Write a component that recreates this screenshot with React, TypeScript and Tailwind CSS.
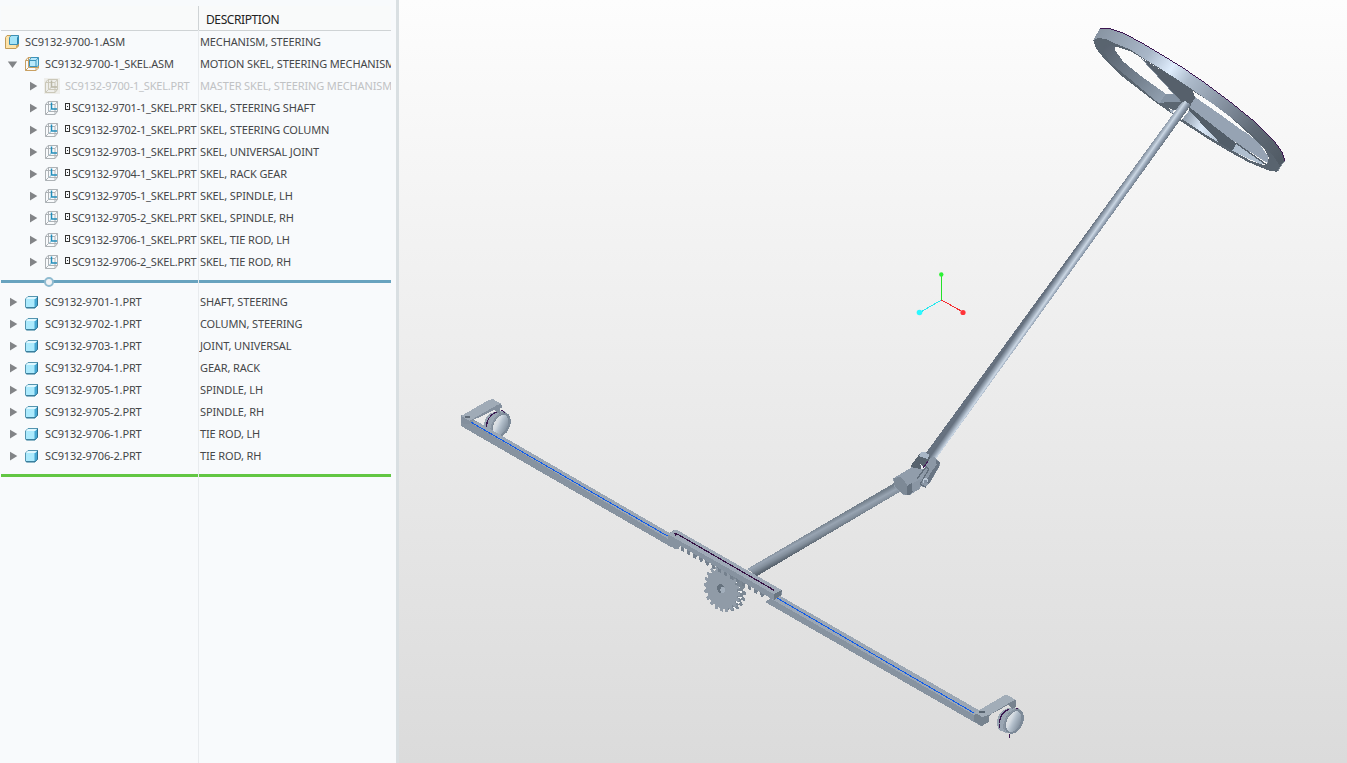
import React from "react";

type Kind = "asm" | "skelAsm" | "skel" | "ghost" | "part";
type Row = { name: string; desc: string; kind: Kind; level: number; open?: boolean; flag?: boolean };

const skeletons: Row[] = [
  { name: "SC9132-9700-1.ASM", desc: "MECHANISM, STEERING", kind: "asm", level: -1 },
  { name: "SC9132-9700-1_SKEL.ASM", desc: "MOTION SKEL, STEERING MECHANISM", kind: "skelAsm", level: 0, open: true },
  { name: "SC9132-9700-1_SKEL.PRT", desc: "MASTER SKEL, STEERING MECHANISM", kind: "ghost", level: 1 },
  { name: "SC9132-9701-1_SKEL.PRT", desc: "SKEL, STEERING SHAFT", kind: "skel", level: 1, flag: true },
  { name: "SC9132-9702-1_SKEL.PRT", desc: "SKEL, STEERING COLUMN", kind: "skel", level: 1, flag: true },
  { name: "SC9132-9703-1_SKEL.PRT", desc: "SKEL, UNIVERSAL JOINT", kind: "skel", level: 1, flag: true },
  { name: "SC9132-9704-1_SKEL.PRT", desc: "SKEL, RACK GEAR", kind: "skel", level: 1, flag: true },
  { name: "SC9132-9705-1_SKEL.PRT", desc: "SKEL, SPINDLE, LH", kind: "skel", level: 1, flag: true },
  { name: "SC9132-9705-2_SKEL.PRT", desc: "SKEL, SPINDLE, RH", kind: "skel", level: 1, flag: true },
  { name: "SC9132-9706-1_SKEL.PRT", desc: "SKEL, TIE ROD, LH", kind: "skel", level: 1, flag: true },
  { name: "SC9132-9706-2_SKEL.PRT", desc: "SKEL, TIE ROD, RH", kind: "skel", level: 1, flag: true },
];

const parts: Row[] = [
  { name: "SC9132-9701-1.PRT", desc: "SHAFT, STEERING", kind: "part", level: 0 },
  { name: "SC9132-9702-1.PRT", desc: "COLUMN, STEERING", kind: "part", level: 0 },
  { name: "SC9132-9703-1.PRT", desc: "JOINT, UNIVERSAL", kind: "part", level: 0 },
  { name: "SC9132-9704-1.PRT", desc: "GEAR, RACK", kind: "part", level: 0 },
  { name: "SC9132-9705-1.PRT", desc: "SPINDLE, LH", kind: "part", level: 0 },
  { name: "SC9132-9705-2.PRT", desc: "SPINDLE, RH", kind: "part", level: 0 },
  { name: "SC9132-9706-1.PRT", desc: "TIE ROD, LH", kind: "part", level: 0 },
  { name: "SC9132-9706-2.PRT", desc: "TIE ROD, RH", kind: "part", level: 0 },
];

function RowIcon({ kind }: { kind: Kind }) {
  if (kind === "asm")
    return (
      <svg className="h-4 w-4 shrink-0" viewBox="0 0 16 16">
        <path d="M1.500 3.500 3 1.500h11.500V12L12 14.500H1.500Z" fill="#fde3a9" stroke="#c39c58" />
        <path d="M12 14.500v-3l2.500-1v1.500Z" fill="#cda662" />
        <path d="M5.500 3.500 7 1.500h7.500v8L13 10.500H5.500Z" fill="#a5e4f8" stroke="#3c8fb5" />
        <path d="M13 3.500l1.500-2v8l-1.500 1.500Z" fill="#2d86b0" />
      </svg>
    );
  if (kind === "skelAsm")
    return (
      <svg className="h-4 w-4 shrink-0" viewBox="0 0 16 16" fill="none">
        <path d="M1.500 4.500 4 1.500h10.500V12L12 14.500H1.500ZM1.500 4.500H12v10M4.500 2v9.500h9.500M1.500 14.500l3-3" stroke="#c9a062" />
        <path d="M5.500 4 7 1.500h7.500v8l-1.500 1H5.500Z" fill="#b9e9fb" stroke="#3c93bb" />
        <path d="M5.500 4.500h6.500v6M12 4.500l2-2.500" stroke="#3c93bb" />
      </svg>
    );
  if (kind === "skel" || kind === "ghost") {
    const g = kind === "ghost";
    return (
      <svg className={g ? "h-4 w-4 shrink-0 bg-[#eeeeeb]" : "h-4 w-4 shrink-0"} viewBox="0 0 16 16" fill="none">
        <path d="M1.500 4.500 4 1.500h9.500V11.500L11 14.500H1.500ZM1.500 4.500H11v10M4.500 2v9.500h9M1.500 14.500l3-3M11 4.500l2.500-3" stroke={g ? "#cbc8b9" : "#adb2b6"} />
        <path d="M7.500 2.500v6.500H13" stroke={g ? "#b9b6a5" : "#208dbb"} strokeWidth="1.500" />
        <path d="M7.500 9l-2 2" stroke={g ? "#c6c3b4" : "#70b6d3"} />
      </svg>
    );
  }
  return (
    <svg className="h-4 w-4 shrink-0" viewBox="0 0 16 16">
      <path d="M1.500 5 4 2.500h9.500v8.500L11 14H2.500L1.500 13Z" fill="#aceafd" stroke="#5495b0" />
      <path d="M10.500 5.500 13.500 2.500v8.500l-3 3Z" fill="#45a8d3" />
      <path d="M13.500 2.500v8.700L11 13.700H2" fill="none" stroke="#2c7090" />
      <path d="M2 5 4 3h9l-2 2Z" fill="#dff8ff" />
    </svg>
  );
}

function Expander({ open }: { open?: boolean }) {
  return (
    <svg className="mr-2 h-3 w-3 shrink-0" viewBox="0 0 12 12">
      {open ? <path d="M1.800 3.500h9.400L6.500 10Z" fill="#828487" /> : <path d="M3 1.800v8.600l7.300-4.300Z" fill="#828487" />}
    </svg>
  );
}

function indent(row: Row) {
  if (row.level < 0) return "pl-1";
  if (row.kind === "skelAsm") return "pl-[6px]";
  return row.level === 0 ? "pl-[7px]" : "pl-[27px]";
}

function TreeRow({ row }: { row: Row }) {
  const tone = row.kind === "ghost" ? "text-[#c0c2c4]" : "text-[#454749]";
  return (
    <div className={`flex h-[22px] w-[391px] items-center ${tone}`}>
      <div className={`flex h-full w-[198px] shrink-0 items-center whitespace-nowrap ${indent(row)}`}>
        {row.level < 0 ? null : <Expander open={row.open} />}
        <span className={row.level < 0 ? "flex" : row.kind === "skelAsm" ? "-ml-[2px] flex" : "-ml-[3px] flex"}>
          <RowIcon kind={row.kind} />
        </span>
        {row.flag ? (
          <svg className="mb-[3px] ml-[5px] mr-px h-[7px] w-[6px] shrink-0" viewBox="0 0 6 7" shapeRendering="crispEdges">
            <path d="M.5.5h4v6h-4Z" fill="none" stroke="#333" />
            <path d="M2 3h1v1H2Z" fill="#333" />
          </svg>
        ) : null}
        <span className={row.flag ? "leading-5 tracking-[-0.2px]" : row.level === 1 ? "pl-[5px] leading-5 tracking-[-0.2px]" : "pl-[5px] leading-5 tracking-[-0.16px]"}>{row.name}</span>
      </div>
      <div className="min-w-0 flex-1 overflow-hidden whitespace-nowrap pl-[2px] leading-5 tracking-[-0.13px]">{row.desc}</div>
    </div>
  );
}

function gearPoints(cx: number, cy: number, rx: number, ry: number, teeth: number, tilt: number) {
  const pts: string[] = [];
  const t = (tilt * Math.PI) / 180;
  for (let i = 0; i < teeth; i++) {
    [[0, 0.88], [0.18, 0.88], [0.3, 1.03], [0.75, 1.03], [0.87, 0.88]].forEach(([o, k]) => {
      const a = ((i + o) / teeth) * Math.PI * 2;
      const x = Math.cos(a) * rx * k;
      const y = Math.sin(a) * ry * k;
      pts.push(`${(cx + x * Math.cos(t) - y * Math.sin(t)).toFixed(1)},${(cy + x * Math.sin(t) + y * Math.cos(t)).toFixed(1)}`);
    });
  }
  return pts.join(" ");
}

function rackTeeth() {
  let d = "M60 66";
  for (let i = 0; i < 14; i++) {
    const x = 62 + i * 18.3;
    const y = 80 + i * 10.5;
    d += `L${x} ${y - 5}L${x + 2} ${y + 12}L${x + 10} ${y + 16}L${x + 12} ${y + 1}`;
  }
  return d + "L320 215L320 190Z";
}

function Spindle() {
  return (
    <g>
      <path d="M102 112C100 90 112 68 138 64L165 64L180 78L175 110L150 140L128 138L108 130Z" fill="#9aa6b3" />
      <ellipse cx="153" cy="104" rx="27" ry="39" transform="rotate(25 153 104)" fill="#7d8a98" />
      <ellipse cx="152" cy="105" rx="20" ry="33" transform="rotate(25 152 105)" fill="url(#bore)" />
      <path d="M126 134C116 112 132 80 158 68" fill="none" stroke="#8a96a3" strokeWidth="4" />
      <path d="M110 112V124M110 110C109 88 121 75 139 66" fill="none" stroke="#3a174f" strokeWidth="3.500" />
    </g>
  );
}

function Model() {
  return (
    <svg className="h-full w-full" viewBox="399 0 948 763" shapeRendering="crispEdges">
      <defs>
        <linearGradient id="shaft" gradientUnits="userSpaceOnUse" x1="1053" y1="281" x2="1063" y2="288">
          <stop offset="0" stopColor="#66717f" />
          <stop offset=".25" stopColor="#98a5b4" />
          <stop offset=".48" stopColor="#cbd7e4" />
          <stop offset=".7" stopColor="#94a2b3" />
          <stop offset="1" stopColor="#606b77" />
        </linearGradient>
        <linearGradient id="lower" gradientUnits="userSpaceOnUse" x1="823" y1="524" x2="829" y2="535">
          <stop offset="0" stopColor="#74808c" />
          <stop offset=".35" stopColor="#98a4b2" />
          <stop offset=".65" stopColor="#84909d" />
          <stop offset="1" stopColor="#5b6671" />
        </linearGradient>
        <linearGradient id="rim" gradientUnits="userSpaceOnUse" x1="40" y1="60" x2="600" y2="440">
          <stop offset="0" stopColor="#8793a1" />
          <stop offset=".25" stopColor="#a9b7c8" />
          <stop offset=".37" stopColor="#dfedfd" />
          <stop offset=".46" stopColor="#aebccc" />
          <stop offset=".65" stopColor="#8591a0" />
          <stop offset=".82" stopColor="#606a76" />
          <stop offset="1" stopColor="#515b65" />
        </linearGradient>
        <linearGradient id="inner" gradientUnits="userSpaceOnUse" x1="80" y1="90" x2="260" y2="260">
          <stop offset="0" stopColor="#59636f" />
          <stop offset=".6" stopColor="#778492" />
          <stop offset="1" stopColor="#96a4b4" />
        </linearGradient>
        <linearGradient id="innerLow" gradientUnits="userSpaceOnUse" x1="300" y1="310" x2="560" y2="440">
          <stop offset="0" stopColor="#8592a1" />
          <stop offset=".24" stopColor="#dceafa" />
          <stop offset=".5" stopColor="#aebccc" />
          <stop offset="1" stopColor="#b2c0d1" />
        </linearGradient>
        <linearGradient id="bore" x1="0" y1="0" x2="1" y2="0">
          <stop offset="0" stopColor="#dfe1e3" />
          <stop offset=".25" stopColor="#d3dae1" />
          <stop offset=".5" stopColor="#b3bfcb" />
          <stop offset="1" stopColor="#8592a0" />
        </linearGradient>
      </defs>

      {/* steering wheel */}
      <g transform="translate(1080 15) scale(.33333)">
        <path
          fillRule="evenodd"
          fill="#59646f"
          d="M40 75L46 65L80 65L190 120L330 205L470 315L570 400L605 450L592 470L565 466L520 448L455 412L380 369L305 320L275 295L235 268L130 187L75 135L48 100ZM104 94L150 108L190 132L240 163L320 215L400 271L470 323L525 373L555 405L567 428L562 446L548 452L510 437L455 405L380 361L305 314L270 285L235 262L150 192L90 143L72 110L72 92L84 87Z"
        />
        <path d="M84 87L104 94L105 105L130 140L180 181L257 236L305 238L310 260L235 264L150 192L90 143L72 110L70 92Z" fill="url(#inner)" />
        <path d="M235 263L305 261L308 282L280 286L268 280L282 296L265 288Z" fill="#5b6671" />
        <path d="M268 285L282 286L276 296Z" fill="#a4b1c1" />
        <path d="M256 238L282 236L302 260L240 263Z" fill="#8593a3" />
        <path d="M305 315L328 286L430 391L380 363Z" fill="url(#innerLow)" />
        <path d="M345 246L400 276L500 352L538 386L565 425L565 446L475 388L330 286L326 276Z" fill="#96a3b3" />
        <path d="M322 221L345 232L430 286L505 357L490 349L420 298L345 246Z" fill="#fafafa" />
        <path d="M465 385L558 448L540 447L453 406Z" fill="#b0bfcf" />
        <path d="M326 275L469 385L455 411L427 392L328 287Z" fill="#535e69" />
        <path d="M469 385L560 450" stroke="#56616c" strokeWidth="4" />
        <path d="M305 316L380 365L455 410L510 440L550 454L592 468" fill="none" stroke="#59646f" strokeWidth="7" />
        <path d="M184 130L210 145L335 222L346 248L328 275L305 262Z" fill="#56606b" />
        <path d="M184 130L305 262" stroke="#7e8a98" strokeWidth="3" />
        <path
          fill="url(#rim)"
          d="M60 40L90 41L130 54L200 92L300 153L360 193L450 260L530 325L580 375L607 412L614 437L592 470L599 452L578 420L530 370L470 320L400 268L320 212L240 160L190 130L150 103L105 85L80 73L55 69L40 75Z"
        />
        <path d="M593 469L604 450L613 439" fill="none" stroke="#7e8994" strokeWidth="3" />
        <path d="M60 40L90 41L130 54L200 92L300 153L360 193L450 260L530 325L580 375L607 412L614 437" fill="none" stroke="#3c1550" strokeWidth="3" />
      </g>
      <path d="M1181 103L1185 101L1191 105L933 463L923 457Z" fill="url(#shaft)" />

      {/* pinion shaft and universal joint */}
      <path d="M747 569L896 482L903 490L757 576Z" fill="url(#lower)" />
      <g transform="translate(880 440) scale(.33333)">
        <path d="M92 78L120 40L132 36L148 43L150 65L120 93L92 85Z" fill="#58636e" />
        <path d="M117 48L122 37L136 37L149 44L143 57Z" fill="#a9b7c7" />
        <path d="M121 72L132 82L148 68L140 93L126 96Z" fill="#e9edf1" />
        <path d="M130 83L144 65L148 76" fill="none" stroke="#421c56" strokeWidth="4" />
        <path d="M150 55L162 50L180 68L179 78L150 128L132 143L115 131L115 115Z" fill="#8c98a6" />
        <path d="M166 56L180 68L176 82L147 132L137 125L153 97L170 75Z" fill="#697583" />
        <path d="M40 115L95 82L129 88L133 112L115 137L113 150L90 165L72 166L42 141Z" fill="#919dab" />
        <path d="M40 115L62 110L80 132L81 165L64 160L44 139Z" fill="#7d8996" />
        <path d="M82 137L95 130L101 151L90 165L80 165Z" fill="#65717e" />
        <path d="M96 132L123 116L131 128L115 151L97 153Z" fill="#8a96a4" />
        <path d="M111 116L139 80L146 88L121 132L137 142" fill="none" stroke="#626e7b" strokeWidth="4" />
        <circle cx="136" cy="122" r="8" fill="#bac7d5" />
        <circle cx="137" cy="125" r="5" fill="#8390a0" />
      </g>

      {/* left spindle ring sits behind the tie rod */}
      <g transform="translate(450 390) scale(.33333)">
        <Spindle />
      </g>

      {/* tie rods */}
      <path d="M478 422L680 539L680 546L671 547L461 426L462 415Z" fill="#8793a0" />
      <path d="M478 422L680 539L675 543L466 420Z" fill="#9ca7b4" />
      <path d="M461 415L474 422L474 433L461 426Z" fill="#8793a0" />
      <path d="M777 594L989 716L981 726L765 602Z" fill="#8793a0" />
      <path d="M777 594L989 716L981 719L768 597Z" fill="#9ca7b4" />

      {/* spindle arms */}
      <g transform="translate(450 390) scale(.33333)">
        <path d="M33 78L118 29L130 28L153 41L157 53L148 56L152 68L142 70L132 60L62 94L60 103L33 100Z" fill="#838f9d" />
        <path d="M33 78L118 29L130 28L153 41L142 45L58 93Z" fill="#a0abb7" />
        <path d="M45 78L61 78L60 84L45 83Z" fill="#5e6975" />
        <path d="M154 61L165 67" stroke="#3c1550" strokeWidth="3" />
      </g>
      <g transform="translate(960 680) scale(.33333)">
        <g transform="translate(9 20)"><Spindle /></g>
        <path d="M43 105L65 91L135 45L147 47L167 60L168 80L157 88L144 75L89 105L87 125L66 138L42 124Z" fill="#77838f" />
        <path d="M43 98L65 86L135 45L147 47L166 59L144 71L89 104L67 111Z" fill="#a2adb8" />
        <path d="M58 94H74V100H57Z" fill="#596571" />
        <path d="M169 84L174 86M148 161V174" stroke="#3c1550" strokeWidth="3" />
      </g>
      <path d="M471.500 422.500L667.500 536M777 598L974 713" stroke="#0f5bea" strokeWidth="1" />

      {/* rack and pinion */}
      <g transform="translate(660 520) scale(.33333)">
        <polygon points={gearPoints(203, 206, 51, 67, 20, -20)} fill="#7c8894" />
        <path d="M222 183l10 4M230 199l10 4M235 214l10 2M235 231l9 4M228 246l10 4M220 261l7 5" stroke="#f1f3f4" strokeWidth="5" />
        <polygon points={gearPoints(185, 208, 50, 68, 20, -20)} fill="#909ba7" />
        <ellipse cx="182" cy="206" rx="11" ry="14" transform="rotate(-20 182 206)" fill="#65717d" />
        <ellipse cx="188" cy="210" rx="7" ry="9" fill="#a2aebb" />
        <path d={rackTeeth()} fill="#75818e" />
        <path d="M24 43L38 32L48 28L365 210L365 224L342 241L320 228L60 77L55 89L45 87L23 67Z" fill="#8793a0" />
        <path d="M24 43L48 28L365 210L341 222Z" fill="#9ea9b6" />
        <path d="M341 222L365 210L364 226L342 240Z" fill="#697580" />
        <path d="M44 39L55 44L343 211M46 45L54 44M332 208L343 211" fill="none" stroke="#351143" strokeWidth="3.500" />
      </g>

      {/* orientation triad */}
      <g fill="none">
        <path d="M941.500 275V300" stroke="#25e02a" />
        <path d="M941.500 300L919 313" stroke="#29e7ee" />
        <path d="M941.500 300L963 312" stroke="#f52c30" />
      </g>
      <g shapeRendering="auto">
        <circle cx="941.300" cy="274.500" r="2.200" fill="#2cf235" />
        <circle cx="919.500" cy="312.500" r="2.800" fill="#2cf8ff" />
        <circle cx="963" cy="312.500" r="2.600" fill="#ff3338" />
      </g>
    </svg>
  );
}

export default function App() {
  return (
    <div className="flex h-[763px] w-[1347px] overflow-hidden bg-[#f8fafc] font-['Noto_Sans','Open_Sans',sans-serif] text-[11px]">
      <aside className="relative flex w-[396px] shrink-0 flex-col">
        <div className="pointer-events-none absolute left-[198px] top-[30px] z-10 h-[733px] w-px bg-[#e8ebee]" />
        <div className="ml-px mt-[6px] flex h-[25px] w-[390px] border-b border-[#cfd3d5] bg-[#f9fafa] text-[#222]">
          <div className="w-[198px] border-r border-[#cfd3d5]" />
          <div className="flex items-center pl-[7px] pt-[4px] text-[12px] leading-5 tracking-[-0.4px]">DESCRIPTION</div>
        </div>
        {skeletons.map((r) => <TreeRow key={r.name + r.kind} row={r} />)}
        <div className="flex h-[17px] w-[391px] items-center pl-px">
          <div className="flex h-[3px] flex-1 items-center bg-[#68a3bf] pl-[43px]">
            <span className="h-[10px] w-[10px] rounded-full border-2 border-[#8fbbd0] bg-[#f1f3f5]" />
          </div>
        </div>
        <div className="pt-px">{parts.map((r) => <TreeRow key={r.name} row={r} />)}</div>
        <div className="ml-px mt-[7px] h-[3px] w-[390px] bg-[#62c643]" />
      </aside>
      <div className="w-[3px] shrink-0 bg-[#d9dfe2]" />
      <main className="min-w-0 flex-1 bg-linear-to-b from-[#fdfdfd] to-[#dbdbdb]">
        <Model />
      </main>
    </div>
  );
}
